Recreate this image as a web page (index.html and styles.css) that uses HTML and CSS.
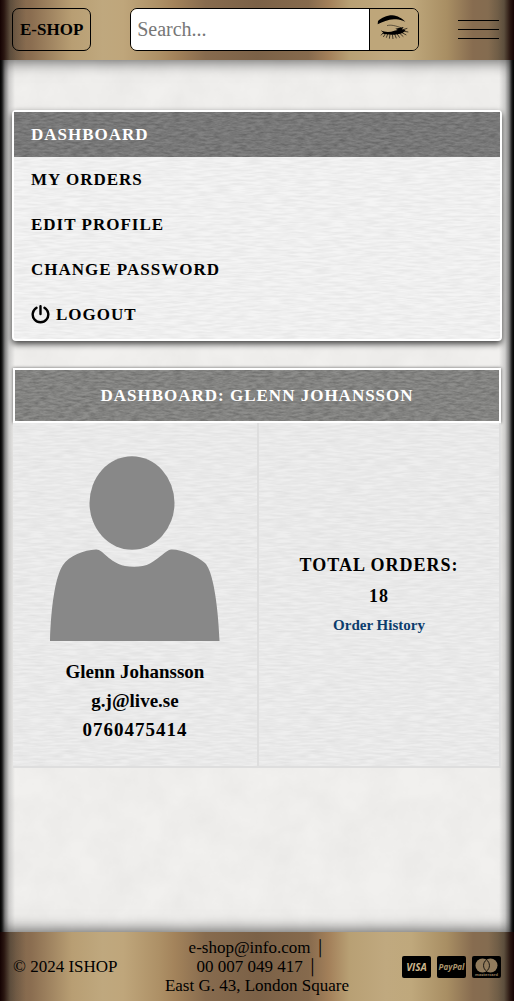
FILE: index.html
```
<!DOCTYPE html>
<html lang="en">
<head>
<meta charset="utf-8">
<meta name="viewport" content="width=device-width, initial-scale=1">
<title>E-SHOP – Dashboard</title>
<link rel="stylesheet" href="styles.css">
</head>
<body>
<header class="topbar metal">
  <a class="brand" href="#">E-SHOP</a>
  <form class="search" role="search">
    <input class="search-input" type="search" placeholder="Search..." aria-label="Search">
    <button class="search-button" type="submit" aria-label="Search">
      <svg width="32" height="24" viewBox="18 34 96 72" fill="none" stroke="#000" aria-hidden="true">
        <path fill="#000" stroke="none" d="M20 62 L21 52 C32 43 46 35 64 35 C80 36 93 45 103 54 C90 48 80 45 69 47 C51 48 35 55 20 62Z"/>
        <path stroke-width="1.500" d="M48 66 C60 62 75 67 90 72"/>
        <path fill="#000" stroke="none" d="M29 80 C42 86 57 86 70 81 L80 79 L73 75 L98 70 L93 77 L104 79 L96 87 C79 94 53 96 33 89 L37 87Z"/>
        <path stroke-width="2" d="M36 88 L30 95 M43 90 L37 100 M50 91 L46 102 M57 92 L55 105 M64 92 L66 106 M71 91 L76 104 M78 90 L86 102 M85 88 L97 99 M91 86 L106 94 M94 82 L112 85 M96 78 L109 74"/>
      </svg>
    </button>
  </form>
  <button class="burger" type="button" aria-label="Menu"><span></span><span></span><span></span></button>
</header>

<main class="content">
  <nav class="menu" aria-label="Account">
    <a class="menu-item active" href="#" aria-current="page">DASHBOARD</a>
    <a class="menu-item" href="#">MY ORDERS</a>
    <a class="menu-item" href="#">EDIT PROFILE</a>
    <a class="menu-item" href="#">CHANGE PASSWORD</a>
    <a class="menu-item" href="#">
      <svg width="19" height="19" viewBox="0 0 19 19" fill="none" stroke="#000" stroke-width="2.4" stroke-linecap="round" aria-hidden="true">
        <path d="M9.500 1.200V9 M5.500 2.800A7.800 7.800 0 1 0 13.500 2.800"/>
      </svg>
      LOGOUT
    </a>
  </nav>

  <section class="panel">
    <h1 class="panel-title">DASHBOARD: GLENN JOHANSSON</h1>
    <div class="panel-body">
      <div class="cell profile">
        <svg class="avatar" width="170" height="185" viewBox="0 0 170 185" fill="#888" role="img" aria-label="Profile picture">
          <ellipse cx="82" cy="47" rx="42.5" ry="46.7"/>
          <path d="M0 185C1 152 5 121 13 109C19 100 34 94 46 93.500C53 93 58 106 75 110C83 111.500 94 111 100 107.500C110 102 116 94 121 93.500C131 93 147 100 155 107C163 115 168 148 169.500 185Z"/>
        </svg>
        <p class="detail">Glenn Johansson</p>
        <p class="detail">g.j@live.se</p>
        <p class="detail phone">0760475414</p>
      </div>
      <div class="cell totals">
        <h2 class="total">TOTAL ORDERS:</h2>
        <p class="total">18</p>
        <a class="history" href="#">Order History</a>
      </div>
    </div>
  </section>
</main>

<footer class="footer metal">
  <p>© 2024 ISHOP</p>
  <p class="contact">e-shop@info.com <span class="bar">│</span><br>00 007 049 417 <span class="bar">│</span><br>East G. 43, London Square</p>
  <div class="cards">
    <svg width="29" height="22" viewBox="0 0 29 22" role="img" aria-label="Visa">
      <rect width="29" height="22" rx="2"/>
      <text x="14.500" y="15" text-anchor="middle" class="card-visa">VISA</text>
    </svg>
    <svg width="29" height="22" viewBox="0 0 29 22" role="img" aria-label="PayPal">
      <rect width="29" height="22" rx="2"/>
      <text x="14.500" y="13.500" text-anchor="middle" class="card-paypal">PayPal</text>
    </svg>
    <svg width="29" height="22" viewBox="0 0 29 22" role="img" aria-label="Mastercard">
      <rect width="29" height="22" rx="2"/>
      <circle cx="10.500" cy="9.500" r="7" fill="#917b5c"/>
      <circle cx="18.500" cy="9.500" r="7" fill="#917b5c"/>
      <path d="M14.500 3.800a7 7 0 0 1 0 11.400a7 7 0 0 1 0-11.400Z" fill="#917b5c" stroke="#000" stroke-width=".8"/>
      <text x="14.500" y="20" text-anchor="middle" class="card-master">mastercard</text>
    </svg>
  </div>
</footer>
</body>
</html>
```
FILE: styles.css
```
:root {
  --grain: url("data:image/svg+xml,%3Csvg xmlns='http://www.w3.org/2000/svg' width='300' height='300'%3E%3Cfilter id='n' x='0' y='0' width='1' height='1'%3E%3CfeTurbulence type='fractalNoise' baseFrequency='.12 .5' numOctaves='3' stitchTiles='stitch'/%3E%3CfeColorMatrix values='0 0 0 0 0 0 0 0 0 0 0 0 0 0 0 .4 0 0 0 -.12'/%3E%3C/filter%3E%3Crect width='300' height='300' filter='url(%23n)'/%3E%3C/svg%3E");
  --fine-grain: url("data:image/svg+xml,%3Csvg xmlns='http://www.w3.org/2000/svg' width='300' height='300'%3E%3Cfilter id='n' x='0' y='0' width='1' height='1'%3E%3CfeTurbulence type='fractalNoise' baseFrequency='.06 .5' numOctaves='2' stitchTiles='stitch'/%3E%3CfeColorMatrix values='0 0 0 0 0 0 0 0 0 0 0 0 0 0 0 .1 0 0 0 -.03'/%3E%3C/filter%3E%3Crect width='300' height='300' filter='url(%23n)'/%3E%3C/svg%3E");
  --paper: url("data:image/svg+xml,%3Csvg xmlns='http://www.w3.org/2000/svg' width='400' height='400'%3E%3Cfilter id='n' x='0' y='0' width='1' height='1'%3E%3CfeTurbulence type='fractalNoise' baseFrequency='.03' numOctaves='5' stitchTiles='stitch'/%3E%3CfeColorMatrix values='0 0 0 0 0 0 0 0 0 0 0 0 0 0 0 .04 0 0 0 -.01'/%3E%3C/filter%3E%3Crect width='400' height='400' filter='url(%23n)'/%3E%3C/svg%3E");
}

* { box-sizing: border-box; }

body {
  display: flex;
  flex-direction: column;
  min-height: 100vh;
  margin: 0;
  font: 17px/19px "Liberation Serif", "Times New Roman", serif;
  color: #000;
  background:
    linear-gradient(90deg, #000, #1a1a1a 2px, #666c 5px, #9996 9px, #fff0 15px),
    linear-gradient(270deg, #000, #1a1a1a 2px, #666c 5px, #9996 9px, #fff0 15px),
    var(--paper), #f1f0ee;
}

h1, h2, p { margin: 0; }
a { color: inherit; text-decoration: none; }
svg { display: block; }

.metal {
  background:
    linear-gradient(90deg, #140202, #140202cc 4px, #3c352d88 10px, #3c352d44 16px, #3c352d00 26px),
    linear-gradient(270deg, #140202, #140202cc 4px, #3c352d88 10px, #3c352d44 16px, #3c352d00 26px),
    linear-gradient(90deg, #7c634a 0, #8a6d50 6%, #b89e73 14%, #bfa87e 20%, #bfa67b 24%, #ad9066 31%, #a3835b 34%, #876b4e 40%, #7b6147 50%, #866a4d 60%, #a3805a 64%, #b8a074 68%, #c0a97f 75%, #bfa87c 80%, #a88e63 87%, #876c50 92%, #806c50 100%);
}

.topbar {
  display: flex;
  align-items: center;
  justify-content: space-between;
  gap: 16px;
  height: 60px;
  padding: 0 15px 2px 12px;
  box-shadow: 0 2px 14px #0009;
}
.brand {
  padding: 0 7px;
  border: 1px solid #000;
  border-radius: 7px;
  font-size: 17px;
  font-weight: bold;
  line-height: 41px;
}
.search {
  display: flex;
  flex: 0 1 289px;
  min-width: 0;
  height: 43px;
  border: 1px solid #000;
  border-radius: 7px;
  overflow: hidden;
}
.search-input {
  flex: 1;
  min-width: 0;
  padding: 0 6px;
  border: 0;
  font: 20px "Liberation Serif", serif;
  background: #fff;
}
.search-input::placeholder { color: #777; }
.search-button {
  flex: none;
  width: 49px;
  padding: 0 7px 4px;
  border: 0;
  border-left: 1px solid #000;
  background: #bea67a;
}
.burger {
  display: grid;
  gap: 8px;
  width: 41px;
  padding: 0;
  border: 0;
  background: none;
}
.burger span { height: 1px; background: #000; }

.content {
  display: grid;
  align-content: start;
  flex: 1;
  gap: 27px;
  padding: 50px 12px;
}
.menu {
  padding-bottom: 2px;
  border: 2px solid #fff;
  border-radius: 4px;
  background: var(--fine-grain), #f4f4f4;
  box-shadow: 0 3px 6px #000b;
}
.menu-item {
  display: flex;
  align-items: center;
  gap: 6px;
  padding: 0 17px;
  font-size: 17px;
  font-weight: bold;
  line-height: 45px;
  letter-spacing: 1px;
}
.menu-item.active { color: #fff; background: var(--grain), #828282; }

.panel { margin: 0 1px; }
.panel-title {
  border: 2px solid #fff;
  font-size: 17px;
  line-height: 51px;
  letter-spacing: 1px;
  text-align: center;
  color: #fff;
  background: var(--grain), #8e8e8c;
  box-shadow: 0 0 3px #0009;
}
.panel-body {
  display: grid;
  grid-template-columns: 1fr 1fr;
}
.cell {
  display: flex;
  flex-direction: column;
  align-items: center;
  border-bottom: 2px solid #dedede;
  background: var(--fine-grain), #eeeeee;
}
.profile { padding: 33px 0 22px; }
.avatar { margin-bottom: 16px; }
.detail {
  font-size: 19px;
  font-weight: bold;
  line-height: 29px;
}
.phone { letter-spacing: 1px; }
.totals {
  justify-content: center;
  border-right: 2px solid #dedede;
  border-left: 2px solid #dedede;
}
.total {
  font-size: 18px;
  font-weight: bold;
  line-height: 31px;
  letter-spacing: 1px;
}
.history {
  font-size: 15px;
  font-weight: bold;
  line-height: 27px;
  color: #0b3c6d;
}

.footer {
  display: grid;
  grid-template-columns: 1fr auto 1fr;
  align-items: center;
  padding: 6px 13px;
  box-shadow: 0 -2px 14px #0009;
}
.contact { text-align: center; }
.bar {
  font-size: 15px;
  line-height: 1;
}
.cards {
  display: flex;
  justify-content: flex-end;
  gap: 6px;
}
.card-visa, .card-paypal, .card-master {
  font-family: "Open Sans", sans-serif;
  font-style: italic;
  font-weight: bold;
  fill: #cdb68c;
}
.card-visa { font-size: 10px; }
.card-paypal { font-size: 8px; fill: #aa946c; }
.card-master { font-size: 4px; font-style: normal; fill: #917b5c; }
```
